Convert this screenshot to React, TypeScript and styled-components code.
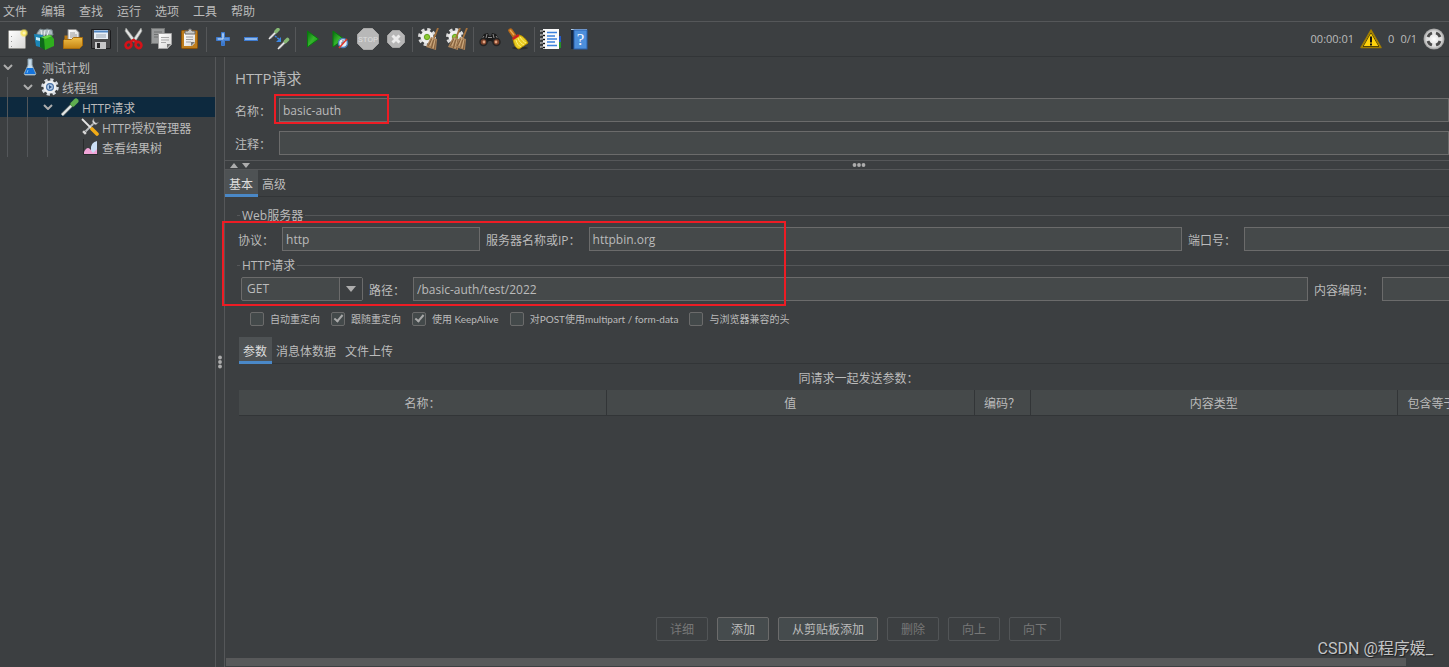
import React from "react";
import styled, { createGlobalStyle, css } from "styled-components";

const c = {
  bg: "#3c3f41",
  field: "#45494a",
  fieldBorder: "#6b6b6b",
  line: "#555759",
  dark: "#323537",
  text: "#bbbbbb",
  disabled: "#777777",
  select: "#0d293e",
  accent: "#4a88c7",
  tab: "#4e5254",
  red: "#ed1c24",
};

const Global = createGlobalStyle`
  *, *::before, *::after { box-sizing: border-box; }
  body {
    margin: 0;
    background: ${c.bg};
    color: ${c.text};
    font: 12px/16px "Open Sans", "Noto Sans CJK SC", sans-serif;
  }
  button, input, select { font: inherit; color: inherit; }
`;

const Page = styled.div`
  position: relative;
  display: flex;
  flex-direction: column;
  min-height: 100vh;
  overflow: hidden;
`;

const MenuBar = styled.nav`
  display: flex;
  gap: 14px;
  height: 22px;
  padding: 0 3px;
  border-bottom: 1px solid ${c.line};
`;

const MenuItem = styled.button`
  padding: 2px 0 0;
  border: 0;
  background: none;
  white-space: nowrap;
`;

const ToolBar = styled.div`
  display: flex;
  align-items: center;
  height: 35px;
  padding: 0 4px 0 3px;
  border-bottom: 1px solid ${c.dark};
`;

const ToolButton = styled.button`
  display: flex;
  align-items: center;
  justify-content: center;
  flex: none;
  width: 28px;
  height: 28px;
  padding: 0;
  border: 0;
  background: none;
`;

const ToolSeparator = styled.span`
  flex: none;
  width: 1px;
  height: 25px;
  margin: 0 2px;
  background: ${c.line};
`;

const Status = styled.div`
  display: flex;
  align-items: center;
  gap: 6px;
  margin-left: auto;
  font-size: 11px;
`;

const Workspace = styled.div`
  display: flex;
  flex: 1;
`;

const TreePanel = styled.ul`
  flex: none;
  width: 215px;
  margin: 0;
  padding: 0;
  list-style: none;
`;

const TreeRow = styled.li<{ $selected?: boolean }>`
  display: flex;
  align-items: center;
  height: 20px;
  background: ${(p) => (p.$selected ? c.select : "none")};
`;

const TreeText = styled.span`
  padding-top: 4px;
  white-space: nowrap;
`;

const TreeSlot = styled.span<{ $guide?: boolean }>`
  flex: none;
  width: 20px;
  height: 20px;
  padding-left: 7px;
  ${(p) =>
    p.$guide &&
    css`
      &::before {
        content: "";
        display: block;
        width: 1px;
        height: 100%;
        background: #54575a;
      }
    `}
`;

const Toggle = styled.button`
  display: flex;
  align-items: center;
  flex: none;
  width: 20px;
  height: 20px;
  padding: 0 0 0 3px;
  border: 0;
  background: none;
`;

const TreeIcon = styled.span`
  display: flex;
  align-items: center;
  justify-content: center;
  flex: none;
  width: 20px;
  margin-right: 2px;
`;

const VerticalSplit = styled.div`
  display: flex;
  flex: none;
  flex-direction: column;
  align-items: center;
  justify-content: center;
  width: 10px;
  border: solid ${c.line};
  border-width: 0 1px;
`;

const Main = styled.main`
  display: flex;
  flex: 1;
  flex-direction: column;
  min-width: 0;
  overflow: hidden;
`;

const Header = styled.header`
  display: flex;
  flex-direction: column;
  gap: 9px;
  padding: 10px 0 5px 10px;
`;

const Title = styled.h1`
  margin: 0;
  font-size: 15px;
  font-weight: 400;
  line-height: 22px;
`;

const HeaderRow = styled.div`
  display: flex;
  align-items: center;
`;

const Label = styled.label`
  flex: none;
  padding: 4px 8px 0 0;
  white-space: nowrap;
`;

const TextField = styled.input<{ $width?: number }>`
  flex: ${(p) => (p.$width ? "none" : "1")};
  width: ${(p) => (p.$width ? `${p.$width}px` : "auto")};
  min-width: 0;
  height: 24px;
  padding: 0 3px;
  border: 1px solid ${c.fieldBorder};
  border-radius: 0;
  outline: 0;
  background: ${c.field};
`;

const HorizontalSplit = styled.div`
  display: grid;
  grid-template-columns: 1fr auto 1fr;
  align-items: center;
  width: calc(100% + 43px);
  height: 10px;
  border: solid ${c.line};
  border-width: 1px 0;
`;

const SplitArrows = styled.span`
  display: flex;
  gap: 4px;
  padding-left: 5px;
`;

const Tabs = styled.div`
  display: flex;
  flex: none;
  height: 27px;
  box-shadow: inset 0 -1px ${c.dark};
`;

const Tab = styled.button<{ $active?: boolean }>`
  padding: 6px 5px 0 4px;
  border: 0;
  border-bottom: 3px solid ${(p) => (p.$active ? c.accent : "transparent")};
  background: ${(p) => (p.$active ? c.tab : "none")};
  color: ${(p) => (p.$active ? "#dddddd" : c.text)};
  white-space: nowrap;
`;

const Panel = styled.section`
  display: flex;
  flex: 1;
  flex-direction: column;
  width: calc(100% + 29px);
  padding: 10px 0 17px 12px;
`;

const Group = styled.fieldset`
  min-width: 0;
  margin: 0 0 6px;
  padding: 0;
  border: 0;
`;

const GroupTitle = styled.div`
  display: flex;
  align-items: center;
  gap: 2px;
  height: 16px;
  margin-bottom: 4px;
  white-space: nowrap;
  &::before,
  &::after {
    content: "";
    width: 3px;
    height: 1px;
    background: ${c.line};
  }
  &::after {
    flex: 1;
  }
  span {
    padding-top: 2px;
  }
`;

const FieldRow = styled.div<{ $indent: number }>`
  display: flex;
  align-items: center;
  padding-left: ${(p) => p.$indent}px;
  padding-right: 2px;
`;

const Field = styled.div<{ $grow?: boolean }>`
  display: flex;
  align-items: center;
  flex: ${(p) => (p.$grow ? "1" : "none")};
  margin-left: 6px;
  &:first-child {
    margin-left: 0;
  }
`;

const SelectBox = styled.div`
  display: grid;
  grid-template-columns: 1fr 23px;
  width: 122px;
  height: 24px;
  border: 1px solid ${c.fieldBorder};
  border-radius: 2px;
  background: ${c.field};
`;

const Select = styled.select`
  grid-row: 1;
  grid-column: 1 / 3;
  padding: 0 5px;
  border: 0;
  outline: 0;
  appearance: none;
  background: none;
`;

const SelectArrow = styled.span`
  display: flex;
  grid-row: 1;
  grid-column: 2;
  align-items: center;
  justify-content: center;
  border-left: 1px solid ${c.fieldBorder};
  background: ${c.bg};
  pointer-events: none;
`;

const Options = styled.div`
  display: flex;
  align-items: center;
  gap: 11px;
  height: 20px;
  margin: 2px 0 8px;
  padding-left: 13px;
  font-family: Lato, "Noto Sans CJK SC", sans-serif;
  font-size: 10px;
`;

const Option = styled.label`
  display: flex;
  align-items: center;
  gap: 6px;
  white-space: nowrap;
`;

const CheckBox = styled.input`
  display: flex;
  justify-content: center;
  width: 14px;
  height: 14px;
  margin: 0;
  border: 1px solid ${c.fieldBorder};
  border-radius: 2px;
  appearance: none;
  background: #43494a;
  &:checked::after {
    content: "";
    width: 5px;
    height: 9px;
    border: solid #a9a9a9;
    border-width: 0 2px 2px 0;
    transform: rotate(40deg);
  }
`;

const Parameters = styled.section`
  display: flex;
  flex: 1;
  flex-direction: column;
  padding-left: 2px;
`;

const Table = styled.table`
  width: 100%;
  border-collapse: collapse;
  table-layout: fixed;
  caption {
    height: 26px;
    padding-top: 7px;
  }
`;

const HeadCell = styled.th<{ $width?: number }>`
  width: ${(p) => (p.$width ? `${p.$width}px` : "auto")};
  height: 25px;
  padding: 4px 0 0;
  border-right: 1px solid ${c.dark};
  border-bottom: 1px solid ${c.dark};
  background: ${c.field};
  font-weight: 400;
  white-space: nowrap;
`;

const Actions = styled.div`
  display: flex;
  justify-content: center;
  gap: 9px;
  margin-top: auto;
`;

const ActionButton = styled.button`
  height: 24px;
  padding: 2px 13px 0;
  border: 1px solid ${c.fieldBorder};
  border-radius: 2px;
  background: #454b4d;
  box-shadow: 0 1px #36393a;
  line-height: 20px;
  &:disabled {
    border-color: #525557;
    background: none;
    box-shadow: none;
    color: ${c.disabled};
  }
`;

const ScrollTrack = styled.div`
  flex: none;
  height: 9px;
  padding: 0 43px 1px 1px;
`;

const ScrollThumb = styled.div`
  height: 8px;
  background: #58595a;
`;

const Mark = styled.div<{ $x: number; $y: number; $w: number; $h: number }>`
  position: absolute;
  left: ${(p) => p.$x}px;
  top: ${(p) => p.$y}px;
  width: ${(p) => p.$w}px;
  height: ${(p) => p.$h}px;
  border: 2px solid ${c.red};
  pointer-events: none;
`;

const Watermark = styled.div`
  position: absolute;
  right: 16px;
  bottom: 8px;
  color: #c4c5c6;
  font: 16px/20px Roboto, "Noto Sans CJK SC", sans-serif;
  text-shadow: 1px 1px 1px #1e1f20;
`;

const Svg = ({ w = 22, h = w, children }: { w?: number; h?: number; children: React.ReactNode }) => (
  <svg width={w} height={h} viewBox={`0 0 ${w} ${h}`} fill="none" aria-hidden="true">
    {children}
  </svg>
);

const Defs = () => (
  <svg width="0" height="0" style={{ position: "absolute" }} aria-hidden="true">
    <defs>
      <linearGradient id="paper" x1="0" y1="0" x2="1" y2="1">
        <stop stopColor="#ffffff" />
        <stop offset="1" stopColor="#d8d8d6" />
      </linearGradient>
      <linearGradient id="gold" x1="0" y1="0" x2="0" y2="1">
        <stop stopColor="#f0c04a" />
        <stop offset="1" stopColor="#c48312" />
      </linearGradient>
      <linearGradient id="green" x1="0" y1="0" x2="1" y2="1">
        <stop stopColor="#066b0c" />
        <stop offset=".5" stopColor="#35b52c" />
        <stop offset="1" stopColor="#0c8a12" />
      </linearGradient>
      <linearGradient id="blue" x1="0" y1="0" x2="0" y2="1">
        <stop stopColor="#8ab9f0" />
        <stop offset="1" stopColor="#2d6cc4" />
      </linearGradient>
      <radialGradient id="sun">
        <stop stopColor="#fffbe0" />
        <stop offset=".5" stopColor="#f6e45a" />
        <stop offset="1" stopColor="#f6e45a" stopOpacity="0" />
      </radialGradient>
      <radialGradient id="metal">
        <stop stopColor="#ffffff" />
        <stop offset=".75" stopColor="#d8d8d8" />
        <stop offset="1" stopColor="#9a9a9a" />
      </radialGradient>
    </defs>
  </svg>
);

const NewIcon = () => (
  <Svg>
    <rect x="2.5" y="2.5" width="17" height="18" rx="1" fill="url(#paper)" stroke="#8e8e8a" />
    <path d="M5.5 8v1M5.5 13v1M5.5 18v1" stroke="#999" />
    <circle cx="18" cy="5" r="4.5" fill="url(#sun)" />
  </Svg>
);
const TemplatesIcon = () => (
  <Svg>
    <path d="M3 5l3-4 4 1 3-1 5 1 1 5H3z" fill="#aebbc0" stroke="#77868c" />
    <path d="M7 2l1 6M11 2l-1 6M15 2l-2 6" stroke="#e6eef0" />
    <path d="M0 6l9 1v13l-7-2z" fill="#1a86b8" />
    <path d="M2 9l4 1v3l-4-1z" fill="#c5eefa" />
    <path d="M6 9l5 1v12l-5-3z" fill="#0d6a1a" />
    <path d="M10 11l7-4 3 4v7l-9 4z" fill="#2fae1e" />
    <path d="M7 9l8-2 3 1-7 3z" fill="#66da43" />
  </Svg>
);
const OpenIcon = () => (
  <Svg>
    <path d="M2.5 7.5h5l1 2h9v11h-15z" fill="#b9770f" />
    <path d="M6 1.500h8l3 3V13H6z" fill="url(#paper)" stroke="#8c8c8c" />
    <path d="M8 5h5M8 7h7M8 9h7" stroke="#9b9b9b" />
    <path d="M1.500 20.500v-8l1-1h7l2-2h9v8l-3 3z" fill="url(#gold)" stroke="#a96c0c" />
  </Svg>
);
const SaveIcon = () => (
  <Svg>
    <path d="M1.500 1.500h18l1 1v18h-19z" fill="#4b4b4d" stroke="#1c1c1e" />
    <rect x="4" y="2" width="14" height="9" fill="#e9f0f7" />
    <path d="M4 3.500h14" stroke="#5288c5" strokeWidth="2" />
    <path d="M6 7h10M6 9h10" stroke="#98a4b2" />
    <rect x="5" y="14" width="11" height="7" fill="#c7c7c9" />
    <rect x="7" y="15" width="3" height="5" fill="#28282a" />
  </Svg>
);
const CutIcon = () => (
  <Svg>
    <path d="M3 0l10 13-3 1L2 3zM18 0L9 13l3 1 7-11z" fill="#e2e3e2" stroke="#949694" strokeWidth=".7" />
    <ellipse cx="5.500" cy="17" rx="2.800" ry="3.200" stroke="#d51218" strokeWidth="2.600" transform="rotate(35 5.500 17)" />
    <ellipse cx="15.500" cy="17" rx="2.800" ry="3.200" stroke="#d51218" strokeWidth="2.600" transform="rotate(-35 15.500 17)" />
    <path d="M7 14l3.500-2 3.500 2" stroke="#d51218" strokeWidth="2.500" />
  </Svg>
);
const CopyIcon = () => (
  <Svg>
    <rect x="0.500" y="0.500" width="13" height="15" fill="#999b9b" stroke="#737575" />
    <path d="M3 4h8M3 6.500h8M3 9h4" stroke="#6f7171" />
    <path d="M7.500 5.500h13v11l-4 4h-9z" fill="url(#paper)" stroke="#a2a2a2" />
    <path d="M10 9.500h8M10 12h8M10 14.500h5" stroke="#a8a8a8" />
    <path d="M20 16h-4v4z" fill="#777" />
  </Svg>
);
const PasteIcon = () => (
  <Svg>
    <rect x="2.500" y="2.500" width="16" height="18" rx="1" fill="#bd7d1d" stroke="#8d5306" />
    <path d="M5 5h11v10l-3 3H5z" fill="url(#paper)" />
    <path d="M7 9h7M7 11.500h7M7 14h5" stroke="#9d9d9d" />
    <path d="M16 14h-4v4z" fill="#7b7b78" />
    <path d="M6 6V3h3l1-2h2l1 2h3v3z" fill="#c9c9c5" stroke="#666" />
  </Svg>
);
const PlusIcon = () => (
  <Svg w={16}>
    <path d="M6.500 1.500h3v5h5v3h-5v5h-3v-5h-5v-3h5z" fill="url(#blue)" stroke="#3e7bd0" />
    <path d="M8 3v5H3" stroke="#c4dcf8" />
  </Svg>
);
const MinusIcon = () => (
  <Svg w={16}>
    <rect x="1.500" y="6.500" width="13" height="3" fill="#8db7eb" stroke="#3e7bd0" />
  </Svg>
);
const ToggleIcon = () => (
  <Svg>
    <path d="M2 10l7-7M11 20l7-7" stroke="#6f6f6f" strokeWidth="3" />
    <path d="M1 11l8-8M10 21l8-8" stroke="#ececec" strokeWidth="1.600" />
    <path d="M8 3.500l2-2M17.500 13.500l2-2" stroke="#86b874" strokeWidth="3.600" strokeLinecap="round" />
    <path d="M7 8l5 4" stroke="#3b86e4" strokeWidth="1.500" strokeDasharray="2 1" />
    <path d="M13 9v5H8z" fill="#3b86e4" />
  </Svg>
);
const StartIcon = () => (
  <Svg>
    <path d="M6.500 3l11 8-11 8z" fill="url(#green)" stroke="#087c0e" />
  </Svg>
);
const StartNoPauseIcon = () => (
  <Svg>
    <path d="M4 3l11 8-11 8z" fill="url(#green)" stroke="#087c0e" />
    <circle cx="14" cy="15" r="4.500" fill="#e4edf7" stroke="#4c7fb9" strokeWidth="1.500" />
    <path d="M14 12v3h-2" stroke="#607086" />
    <path d="M10 20l8-9" stroke="#e13328" strokeWidth="1.500" />
  </Svg>
);
const StopIcon = () => (
  <Svg>
    <path d="M6.500.5h9l6 6v9l-6 6h-9l-6-6v-9z" fill="#b8b8b8" stroke="#a8a8a8" />
    <text x="11" y="14" textAnchor="middle" fontFamily="Roboto" fontSize="8" fill="#dedede">STOP</text>
  </Svg>
);
const ShutdownIcon = () => (
  <Svg>
    <path d="M7.500 2.500h7l5 5v7l-5 5h-7l-5-5v-7z" fill="#b6b6b6" stroke="#a4a4a4" />
    <path d="M7.500 7.500l7 7M14.500 7.500l-7 7" stroke="#ececec" strokeWidth="3" />
  </Svg>
);
const Gear = () => (
  <>
    <circle cx="9" cy="9" r="7.500" stroke="#dcdcdc" strokeWidth="3" strokeDasharray="3.200 2.690" />
    <circle cx="9" cy="9" r="5" fill="#d4d6d4" stroke="#f0f0f0" strokeWidth="3" />
    <circle cx="9" cy="9" r="2.600" fill="#8cc934" stroke="#65a51c" />
  </>
);
const Broom = ({ x = 0 }: { x?: number }) => (
  <g transform={`translate(${x} 0)`}>
    <path d="M20 0l-4 10" stroke="#a5713c" strokeWidth="1.800" />
    <path d="M13 9l6 2-1 11-10-3z" fill="#a98259" />
    <path d="M14 11l-4 7M15.500 12l-2 8M17.500 12l-1 9" stroke="#765434" strokeWidth=".8" />
    <path d="M15 10l-3 8M17 12l-2 8" stroke="#d7b78d" strokeWidth=".8" />
  </g>
);
const ClearIcon = () => (
  <Svg>
    <Gear />
    <Broom />
  </Svg>
);
const ClearAllIcon = () => (
  <Svg>
    <Gear />
    <Broom x={-6} />
    <Broom x={1} />
  </Svg>
);
const SearchIcon = () => (
  <Svg>
    <path d="M1 13l4-7 4-1 1 3h2l1-3 4 1 4 7-4 4-5-4h-2l-5 4z" fill="#1a1a1a" />
    <path d="M5 8l-2 3M17 8l2 3M9 9.500h4M8 6l-1 4M14 6l1 4" stroke="#8b8b8b" />
    <circle cx="4.500" cy="14" r="3.500" fill="#7b4029" stroke="#242424" strokeWidth="1.500" />
    <circle cx="17.500" cy="14" r="3.500" fill="#7b4029" stroke="#242424" strokeWidth="1.500" />
    <circle cx="5" cy="14" r="1.400" fill="#e3a582" />
    <circle cx="17" cy="14" r="1.400" fill="#e3a582" />
  </Svg>
);
const BroomIcon = () => (
  <Svg>
    <ellipse cx="13" cy="20" rx="8" ry="1.500" fill="#292b2c" />
    <path d="M3.500 2.500L8 9" stroke="#b96b1a" strokeWidth="4.500" strokeLinecap="round" />
    <path d="M3 2l4 5" stroke="#eba850" strokeWidth="1.500" />
    <path d="M6 11l6-4c4 1 7 4 9 8l-9 6c-4-1-5-5-6-10z" fill="#e8cb22" stroke="#b99400" />
    <path d="M9 12c1 4 3 6 5 7M11 10c1 4 4 6 6 7M13 9c2 3 4 5 6 6" stroke="#fff17a" />
    <path d="M5 10l6-4 1.500 2-6 4z" fill="#cb2020" />
  </Svg>
);
const ListIcon = () => (
  <Svg>
    <path d="M18 8h3v6h-3z" fill="#2459c5" />
    <path d="M18 14h3v6h-3z" fill="#25912a" />
    <rect x="3" y="1" width="16" height="20" fill="#fafafa" />
    <path d="M7 4.500h10M7 8h8M7 11h10M7 14h8M7 17.500h10" stroke="#3b80dc" strokeWidth="1.300" />
    <path d="M1 3.500h4M1 7.500h4M1 11.500h4M1 15.500h4M1 19.500h4" stroke="#111" strokeWidth="1.500" />
    <path d="M0 3h3M0 7h3M0 11h3M0 15h3M0 19h3" stroke="#e8e8e8" />
  </Svg>
);
const HelpIcon = () => (
  <Svg>
    <path d="M3 1h3v20H3z" fill="#16263f" />
    <path d="M3 1.500h16" stroke="#aec9e6" />
    <rect x="6" y="2" width="13" height="19" fill="#4d8fdc" stroke="#2b61ad" />
    <text x="12.500" y="17" textAnchor="middle" fontFamily="Liberation Serif" fontSize="17" fill="#f6f9ff">?</text>
  </Svg>
);
const WarningIcon = () => (
  <Svg w={22} h={20}>
    <path d="M11 1L21 18.500H1z" fill="#ffd20c" stroke="#a07c00" strokeWidth="1.500" strokeLinejoin="round" />
    <path d="M11 3.500L19 17.500H3z" stroke="#2b2508" strokeWidth=".8" strokeLinejoin="round" />
    <path d="M11 7.500v6M11 14.500v2" stroke="#111" strokeWidth="2" />
  </Svg>
);
const ThreadsIcon = () => (
  <Svg>
    <circle cx="11" cy="11" r="10.500" fill="url(#metal)" />
    <path d="M5 9a6 6 0 0 1 4-4M13 5a6 6 0 0 1 4 4M17 13a6 6 0 0 1-4 4M9 17a6 6 0 0 1-4-4" stroke="#4b4b4b" strokeWidth="2.800" />
  </Svg>
);
const FlaskIcon = () => (
  <Svg w={14} h={18}>
    <path d="M5 1h4v6l4 9-1 1H2l-1-1 4-9z" fill="#c8dcea" stroke="#8ba1af" />
    <path d="M4 10h6l2.500 6H1.500z" fill="#1573db" />
    <path d="M5 12l-1 3" stroke="#77bdf7" />
  </Svg>
);
const ThreadGroupIcon = () => (
  <Svg w={18}>
    <circle cx="9" cy="9" r="7.500" stroke="#d8dce2" strokeWidth="2.600" strokeDasharray="3.200 2.690" />
    <circle cx="9" cy="9" r="5.200" fill="#c2d2e6" stroke="#eef0f2" strokeWidth="2.800" />
    <circle cx="9" cy="9" r="3.400" fill="#b3cbe8" stroke="#4d74a6" strokeWidth="1.200" />
    <path d="M8 7l3 2-3 2z" fill="#2f568a" />
  </Svg>
);
const DropperIcon = () => (
  <Svg w={18}>
    <path d="M1 17l10-10" stroke="#717878" strokeWidth="3.600" />
    <path d="M1 17L11 7" stroke="#e5eaea" strokeWidth="2" />
    <path d="M9 5l4 4" stroke="#173e22" strokeWidth="2" />
    <path d="M12 6l3-3" stroke="#5fae50" strokeWidth="5" strokeLinecap="round" />
  </Svg>
);
const ToolsIcon = () => (
  <Svg w={18}>
    <path d="M3 15L14 4" stroke="#b9bcbd" strokeWidth="2" />
    <path d="M13 0l-2 3 1 3 3 1 3-3-3 1-2-2zM1 14l2-2 3 3-2 2z" fill="#d5d5d5" stroke="#545657" strokeWidth=".6" />
    <path d="M1 1l9 9" stroke="#e3e3e3" strokeWidth="1.800" />
    <path d="M11 11l5 5" stroke="#f1ab16" strokeWidth="3.600" strokeLinecap="round" />
  </Svg>
);
const ResultsIcon = () => (
  <Svg w={16}>
    <path d="M1.500 0v15.500H16" stroke="#292b2c" />
    <path d="M9 8c1-4 3-5 6-6v13H9z" fill="#cbdff5" />
    <path d="M2 13c2-4 4-5 6-3l3 4 4-4v5H2z" fill="#f1a5d8" />
  </Svg>
);

const tools: { label: string; icon: React.ReactNode }[][] = [
  [
    { label: "新建", icon: <NewIcon /> },
    { label: "模板", icon: <TemplatesIcon /> },
    { label: "打开", icon: <OpenIcon /> },
    { label: "保存", icon: <SaveIcon /> },
  ],
  [
    { label: "剪切", icon: <CutIcon /> },
    { label: "复制", icon: <CopyIcon /> },
    { label: "粘贴", icon: <PasteIcon /> },
  ],
  [
    { label: "展开", icon: <PlusIcon /> },
    { label: "折叠", icon: <MinusIcon /> },
    { label: "切换", icon: <ToggleIcon /> },
  ],
  [
    { label: "启动", icon: <StartIcon /> },
    { label: "不停顿开始", icon: <StartNoPauseIcon /> },
    { label: "停止", icon: <StopIcon /> },
    { label: "关闭", icon: <ShutdownIcon /> },
  ],
  [
    { label: "清除", icon: <ClearIcon /> },
    { label: "清除全部", icon: <ClearAllIcon /> },
  ],
  [
    { label: "查找", icon: <SearchIcon /> },
    { label: "重置搜索", icon: <BroomIcon /> },
  ],
  [
    { label: "函数助手", icon: <ListIcon /> },
    { label: "帮助", icon: <HelpIcon /> },
  ],
];

const tree = [
  { depth: 0, text: "测试计划", icon: <FlaskIcon />, open: true },
  { depth: 1, text: "线程组", icon: <ThreadGroupIcon />, open: true },
  { depth: 2, text: "HTTP请求", icon: <DropperIcon />, open: true, selected: true },
  { depth: 3, text: "HTTP授权管理器", icon: <ToolsIcon /> },
  { depth: 3, text: "查看结果树", icon: <ResultsIcon /> },
];

const options = [
  { text: "自动重定向", on: false },
  { text: "跟随重定向", on: true },
  { text: "使用 KeepAlive", on: true },
  { text: "对POST使用multipart / form-data", on: false },
  { text: "与浏览器兼容的头", on: false },
];

const columns: { text: string; width?: number }[] = [
  { text: "名称：" },
  { text: "值" },
  { text: "编码？", width: 56 },
  { text: "内容类型" },
  { text: "包含等于？", width: 80 },
];

const actions = [
  { text: "详细", off: true },
  { text: "添加" },
  { text: "从剪贴板添加" },
  { text: "删除", off: true },
  { text: "向上", off: true },
  { text: "向下", off: true },
];

export default function App() {
  return (
    <Page>
      <Global />
      <Defs />
      <MenuBar>
        {["文件", "编辑", "查找", "运行", "选项", "工具", "帮助"].map((m) => (
          <MenuItem key={m}>{m}</MenuItem>
        ))}
      </MenuBar>
      <ToolBar>
        {tools.map((group, i) => (
          <React.Fragment key={i}>
            {i > 0 && <ToolSeparator />}
            {group.map((t) => (
              <ToolButton key={t.label} aria-label={t.label}>
                {t.icon}
              </ToolButton>
            ))}
          </React.Fragment>
        ))}
        <Status>
          <span>00:00:01</span>
          <WarningIcon />
          <span>0</span>
          <span>0/1</span>
          <ThreadsIcon />
        </Status>
      </ToolBar>
      <Workspace>
        <TreePanel>
          {tree.map((n) => (
            <TreeRow key={n.text} $selected={n.selected}>
              {Array.from({ length: n.depth }, (_, i) => (
                <TreeSlot key={i} $guide />
              ))}
              {n.open ? (
                <Toggle aria-label="折叠节点">
                  <Svg w={10} h={6}>
                    <path d="M1 1l4 4 4-4" stroke="#adadad" strokeWidth="2" />
                  </Svg>
                </Toggle>
              ) : (
                <TreeSlot />
              )}
              <TreeIcon>{n.icon}</TreeIcon>
              <TreeText>{n.text}</TreeText>
            </TreeRow>
          ))}
        </TreePanel>
        <VerticalSplit>
          <Svg w={4} h={14}>
            <circle cx="2" cy="2.500" r="1.900" fill="#adadad" />
            <circle cx="2" cy="7" r="1.900" fill="#adadad" />
            <circle cx="2" cy="11.500" r="1.900" fill="#adadad" />
          </Svg>
        </VerticalSplit>
        <Main>
          <Header>
            <Title>HTTP请求</Title>
            <HeaderRow>
              <Label htmlFor="name">名称：</Label>
              <TextField id="name" defaultValue="basic-auth" />
            </HeaderRow>
            <HeaderRow>
              <Label htmlFor="comment">注释：</Label>
              <TextField id="comment" />
            </HeaderRow>
          </Header>
          <HorizontalSplit>
            <SplitArrows>
              <Svg w={8} h={5}>
                <path d="M0 5l4-5 4 5z" fill="#adadad" />
              </Svg>
              <Svg w={8} h={5}>
                <path d="M0 0l4 5 4-5z" fill="#adadad" />
              </Svg>
            </SplitArrows>
            <Svg w={14} h={4}>
              <circle cx="2.500" cy="2" r="1.900" fill="#adadad" />
              <circle cx="7" cy="2" r="1.900" fill="#adadad" />
              <circle cx="11.500" cy="2" r="1.900" fill="#adadad" />
            </Svg>
          </HorizontalSplit>
          <Tabs role="tablist">
            <Tab role="tab" $active>基本</Tab>
            <Tab role="tab">高级</Tab>
          </Tabs>
          <Panel>
            <Group>
              <GroupTitle>
                <span>Web服务器</span>
              </GroupTitle>
              <FieldRow $indent={1}>
                <Field>
                  <Label htmlFor="protocol">协议：</Label>
                  <TextField id="protocol" $width={198} defaultValue="http" />
                </Field>
                <Field $grow>
                  <Label htmlFor="server">服务器名称或IP：</Label>
                  <TextField id="server" defaultValue="httpbin.org" />
                </Field>
                <Field>
                  <Label htmlFor="port">端口号：</Label>
                  <TextField id="port" $width={232} />
                </Field>
              </FieldRow>
            </Group>
            <Group>
              <GroupTitle>
                <span>HTTP请求</span>
              </GroupTitle>
              <FieldRow $indent={4}>
                <Field>
                  <SelectBox>
                    <Select aria-label="方法" defaultValue="GET">
                      <option>GET</option>
                      <option>POST</option>
                    </Select>
                    <SelectArrow>
                      <Svg w={10} h={6}>
                        <path d="M0 0h10L5 6z" fill="#adadad" />
                      </Svg>
                    </SelectArrow>
                  </SelectBox>
                </Field>
                <Field $grow>
                  <Label htmlFor="path">路径：</Label>
                  <TextField id="path" defaultValue="/basic-auth/test/2022" />
                </Field>
                <Field>
                  <Label htmlFor="encoding">内容编码：</Label>
                  <TextField id="encoding" $width={94} />
                </Field>
              </FieldRow>
            </Group>
            <Options>
              {options.map((o) => (
                <Option key={o.text}>
                  <CheckBox type="checkbox" defaultChecked={o.on} />
                  {o.text}
                </Option>
              ))}
            </Options>
            <Parameters>
              <Tabs role="tablist">
                <Tab role="tab" $active>参数</Tab>
                <Tab role="tab">消息体数据</Tab>
                <Tab role="tab">文件上传</Tab>
              </Tabs>
              <Table>
                <caption>同请求一起发送参数：</caption>
                <thead>
                  <tr>
                    {columns.map((col) => (
                      <HeadCell key={col.text} $width={col.width} scope="col">
                        {col.text}
                      </HeadCell>
                    ))}
                  </tr>
                </thead>
              </Table>
              <Actions>
                {actions.map((a) => (
                  <ActionButton key={a.text} disabled={a.off}>
                    {a.text}
                  </ActionButton>
                ))}
              </Actions>
            </Parameters>
          </Panel>
          <ScrollTrack>
            <ScrollThumb />
          </ScrollTrack>
        </Main>
      </Workspace>
      <Mark $x={274} $y={94} $w={115} $h={30} />
      <Mark $x={222} $y={221} $w={564} $h={85} />
      <Watermark>CSDN @程序媛_</Watermark>
    </Page>
  );
}
